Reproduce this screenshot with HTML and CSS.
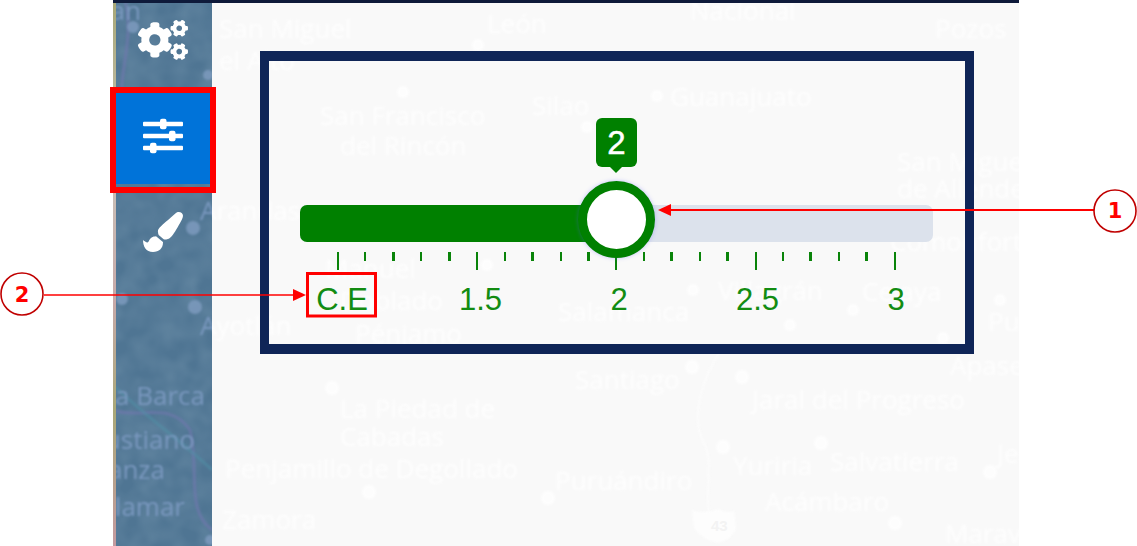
FILE: index.html
```html
<!DOCTYPE html>
<html lang="en">
<head>
    <meta charset="UTF-8">
    <title>Slider help</title>
    <link rel="stylesheet" href="styles.css">
</head>
<body>
<div class="stage">
    <div class="screen">
        <div class="topbar"></div>
        <div class="main">
            <div class="sidebar">
                <!-- map under the menu, same page coordinates as the big map -->
                <svg class="side-map" viewBox="113 3 99 543">
                    <defs>
                        <filter id="grain" x="0" y="0" width="100%" height="100%">
                            <feTurbulence type="fractalNoise" baseFrequency="0.05" numOctaves="2" seed="4"/>
                            <feColorMatrix type="matrix" values="0 0 0 0 0.2  0 0 0 0 0.33  0 0 0 0 0.45  0.7 0.7 0 0 -0.45"/>
                        </filter>
                    </defs>
                    <rect class="grain" x="113" y="3" width="99" height="543" filter="url(#grain)"/>
                    <path class="road-purple" d="M113 410 C140 420 170 400 190 430 C200 470 185 510 212 530"/>
                    <path class="road-purple" d="M125 0 C135 40 118 70 122 110"/>
                    <path class="road-teal" d="M113 385 C150 420 180 440 212 470"/>
                    <g class="side-dots">
                        <circle cx="133" cy="27" r="6"/>
                        <circle cx="208" cy="75" r="5"/>
                        <circle cx="193" cy="228" r="7"/>
                        <circle cx="122" cy="299" r="6"/>
                        <circle cx="195" cy="307" r="7"/>
                        <circle cx="210" cy="540" r="5"/>
                    </g>
                    <g class="side-labels">
                        <text class="end" x="141" y="20">Juan</text>
                        <text x="200" y="220">Arandas</text>
                        <text x="200" y="335">Ayotlán</text>
                        <text class="end" x="205" y="405">La Barca</text>
                        <text class="end" x="195" y="449">Venustiano</text>
                        <text class="end" x="165" y="479">Carranza</text>
                        <text class="end" x="185" y="516">Villamar</text>
                        <text x="222" y="529">Zamora</text>
                    </g>
                </svg>
                <div class="stripe"></div>
                <ul class="nav">
                    <li class="nav-item nav-first">
                        <svg class="icon-cogs" viewBox="0 0 640 512"><path d="M512.1 191l-8.2 14.3c-3 5.3-9.4 7.5-15.1 5.4-11.8-4.4-22.6-10.7-32.1-18.6-4.6-3.8-5.8-10.5-2.8-15.7l8.2-14.3c-6.9-8-12.3-17.3-15.9-27.4h-16.5c-6 0-11.2-4.3-12.2-10.3-2-12-2.1-24.6 0-37.1 1-6 6.2-10.4 12.2-10.4h16.5c3.6-10.1 9-19.4 15.9-27.4l-8.2-14.3c-3-5.2-1.9-11.9 2.8-15.7 9.5-7.9 20.4-14.2 32.1-18.6 5.7-2.1 12.1.1 15.1 5.4l8.2 14.3c10.5-1.9 21.2-1.9 31.7 0L552 6.3c3-5.3 9.4-7.5 15.1-5.4 11.8 4.4 22.6 10.7 32.1 18.6 4.6 3.8 5.8 10.5 2.8 15.7l-8.2 14.3c6.9 8 12.3 17.3 15.9 27.4h16.5c6 0 11.2 4.3 12.2 10.3 2 12 2.1 24.6 0 37.1-1 6-6.2 10.4-12.2 10.4h-16.5c-3.6 10.1-9 19.4-15.9 27.4l8.2 14.3c3 5.2 1.9 11.9-2.8 15.7-9.5 7.9-20.4 14.2-32.1 18.6-5.7 2.1-12.1-.1-15.1-5.4l-8.2-14.3c-10.4 1.9-21.2 1.9-31.7 0zm-10.5-58.8c38.5 29.6 82.4-14.3 52.8-52.8-38.5-29.7-82.4 14.3-52.8 52.8zM386.3 286.1l33.7 16.8c10.1 5.8 14.5 18.1 10.5 29.1-8.9 24.2-26.4 46.4-42.6 65.8-7.4 8.9-20.2 11.1-30.3 5.3l-29.1-16.8c-16 13.7-34.6 24.6-54.9 31.7v33.6c0 11.6-8.3 21.6-19.7 23.6-24.6 4.2-50.4 4.4-75.9 0-11.5-2-20-11.9-20-23.6V418c-20.3-7.2-38.9-18-54.9-31.7L74 403c-10 5.8-22.9 3.6-30.3-5.3-16.2-19.4-33.3-41.6-42.2-65.7-4-10.9.4-23.2 10.5-29.1l33.3-16.8c-3.9-20.9-3.9-42.4 0-63.4L12 205.8c-10.1-5.8-14.6-18.1-10.5-29 8.9-24.2 26-46.4 42.2-65.8 7.4-8.9 20.2-11.1 30.3-5.3l29.1 16.8c16-13.7 34.6-24.6 54.9-31.7V57.1c0-11.5 8.2-21.5 19.6-23.5 24.6-4.2 50.5-4.4 76-.1 11.5 2 20 11.9 20 23.6v33.6c20.3 7.2 38.9 18 54.9 31.7l29.1-16.8c10-5.8 22.9-3.6 30.3 5.3 16.2 19.4 33.2 41.6 42.1 65.8 4 10.9.1 23.2-10 29.1l-33.7 16.8c3.9 21 3.9 42.5 0 63.5zm-117.6 21.1c59.2-77-28.7-164.9-105.7-105.7-59.2 77 28.7 164.9 105.7 105.7zm243.4 182.7l-8.2 14.3c-3 5.3-9.4 7.5-15.1 5.4-11.8-4.4-22.6-10.7-32.1-18.6-4.6-3.8-5.8-10.5-2.8-15.7l8.2-14.3c-6.9-8-12.3-17.3-15.9-27.4h-16.5c-6 0-11.2-4.3-12.2-10.3-2-12-2.1-24.6 0-37.1 1-6 6.2-10.4 12.2-10.4h16.5c3.6-10.1 9-19.4 15.9-27.4l-8.2-14.3c-3-5.2-1.9-11.9 2.8-15.7 9.5-7.9 20.4-14.2 32.1-18.6 5.7-2.1 12.1.1 15.1 5.4l8.2 14.3c10.5-1.9 21.2-1.9 31.7 0l8.2-14.3c3-5.3 9.4-7.5 15.1-5.4 11.8 4.4 22.6 10.7 32.1 18.6 4.6 3.8 5.8 10.5 2.8 15.7l-8.2 14.3c6.9 8 12.3 17.3 15.9 27.4h16.5c6 0 11.2 4.3 12.2 10.3 2 12 2.1 24.6 0 37.1-1 6-6.2 10.4-12.2 10.4h-16.5c-3.6 10.1-9 19.4-15.9 27.4l8.2 14.3c3 5.2 1.9 11.9-2.8 15.7-9.5 7.9-20.4 14.2-32.1 18.6-5.7 2.1-12.1-.1-15.1-5.4l-8.2-14.3c-10.4 1.9-21.2 1.9-31.7 0zM501.6 431c38.5 29.6 82.4-14.3 52.8-52.8-38.5-29.6-82.4 14.3-52.8 52.8z"/></svg>
                    </li>
                    <li class="nav-item active">
                        <svg class="icon-sliders" viewBox="0 0 40 30">
                            <rect x="0" y="0.7" width="40" height="4.6" rx="1"/>
                            <rect x="17" y="-2.3" width="6.5" height="10.6" rx="2"/>
                            <rect x="0" y="12.7" width="40" height="4.6" rx="1"/>
                            <rect x="26" y="9.7" width="6.5" height="10.6" rx="2"/>
                            <rect x="0" y="24.7" width="40" height="4.6" rx="1"/>
                            <rect x="7" y="21.7" width="6.5" height="10.6" rx="2"/>
                        </svg>
                    </li>
                    <li class="nav-item">
                        <svg class="icon-brush" viewBox="0 0 512 512"><path d="M167.02 309.34c-40.12 2.58-76.53 17.86-97.19 72.3-2.35 6.21-8 9.98-14.59 9.98-11.11 0-45.46-27.67-55.25-34.35C0 439.62 37.93 512 128 512c75.86 0 128-43.77 128-120.19 0-3.11-.65-6.08-.97-9.13l-88.01-73.34zM457.89 0c-15.16 0-29.37 6.71-40.21 16.45C213.27 199.05 192 203.34 192 257.09c0 13.7 3.25 26.76 8.73 38.7l63.82 53.18c7.21 1.8 14.64 3.03 22.39 3.03 62.11 0 98.11-45.47 211.16-256.46 7.38-14.35 13.9-29.85 13.9-45.99C512 20.64 486 0 457.89 0z"/></svg>
                    </li>
                </ul>
            </div>
            <div class="map">
                <svg class="map-layer" viewBox="212 3 807 543">
                    <g class="map-dots">
                        <circle cx="478" cy="45" r="6"/>
                        <circle cx="403" cy="92" r="6"/>
                        <circle cx="657" cy="96" r="6"/>
                        <circle cx="587" cy="127" r="6"/>
                        <circle cx="487" cy="265" r="6"/>
                        <circle cx="693" cy="290" r="6"/>
                        <circle cx="853" cy="310" r="6"/>
                        <circle cx="790" cy="325" r="6"/>
                        <circle cx="943" cy="338" r="6"/>
                        <circle cx="1000" cy="300" r="6"/>
                        <circle cx="332" cy="388" r="7"/>
                        <circle cx="369" cy="492" r="7"/>
                        <circle cx="548" cy="498" r="7"/>
                        <circle cx="692" cy="367" r="7"/>
                        <circle cx="742" cy="377" r="7"/>
                        <circle cx="723" cy="447" r="7"/>
                        <circle cx="821" cy="443" r="7"/>
                        <circle cx="990" cy="472" r="7"/>
                        <circle cx="895" cy="523" r="7"/>
                    </g>
                    <path class="map-road" d="M724 345 C700 380 690 420 705 445 C715 470 700 500 715 540"/>
                    <path class="shield" d="M692 510 Q705 515 718 509 Q731 515 734 510 L736 528 Q732 540 718 543 Q702 540 694 528Z"/>
                    <text class="shield-num" x="711" y="531">43</text>
                    <g class="map-labels">
                        <text x="219" y="38">San Miguel</text>
                        <text x="219" y="70">el Alto</text>
                        <text x="487" y="33">León</text>
                        <text x="690" y="20">Nacional</text>
                        <text x="935" y="38">Pozos</text>
                        <text x="320" y="125">San Francisco</text>
                        <text x="340" y="155">del Rincón</text>
                        <text x="532" y="115">Silao</text>
                        <text x="670" y="106">Guanajuato</text>
                        <text x="897" y="171">San Miguel</text>
                        <text x="897" y="198">de Allende</text>
                        <text x="200" y="220">Arandas</text>
                        <text x="890" y="251">Comonfort</text>
                        <text x="325" y="278">Manuel</text>
                        <text x="340" y="310">Doblado</text>
                        <text x="718" y="300">Villagrán</text>
                        <text x="862" y="301">Celaya</text>
                        <text x="558" y="321">Salamanca</text>
                        <text x="200" y="335">Ayotlán</text>
                        <text x="355" y="343">Pénjamo</text>
                        <text x="988" y="331">Purísima</text>
                        <text x="950" y="375">Apaseo</text>
                        <text x="575" y="389">Santiago</text>
                        <text x="752" y="409">Jaral del Progreso</text>
                        <text x="340" y="418">La Piedad de</text>
                        <text x="340" y="446">Cabadas</text>
                        <text x="225" y="478">Penjamillo de Degollado</text>
                        <text x="555" y="490">Puruándiro</text>
                        <text x="733" y="475">Yuriria</text>
                        <text x="830" y="471">Salvatierra</text>
                        <text x="997" y="463">Jerécuaro</text>
                        <text x="765" y="511">Acámbaro</text>
                        <text x="222" y="529">Zamora</text>
                        <text x="945" y="543">Maravatío</text>
                    </g>
                </svg>
                <div class="panel">
                    <div class="slider">
                        <div class="track">
                            <div class="track-fill"></div>
                        </div>
                        <div class="thumb"></div>
                        <div class="bubble">2</div>
                    </div>
                    <div class="ticks">
                        <i class="major"></i><i></i><i></i><i></i><i></i>
                        <i class="major"></i><i></i><i></i><i></i><i></i>
                        <i class="major"></i><i></i><i></i><i></i><i></i>
                        <i class="major"></i><i></i><i></i><i></i><i></i>
                        <i class="major"></i>
                    </div>
                    <div class="scale">
                        <span>C.E</span>
                        <span>1.5</span>
                        <span>2</span>
                        <span>2.5</span>
                        <span>3</span>
                    </div>
                </div>
            </div>
        </div>
    </div>
    <!-- callouts drawn on top of the screenshot -->
    <svg class="notes" viewBox="0 0 1137 546">
        <rect class="red-box thick" x="113" y="90" width="100" height="100"/>
        <rect class="red-box" x="307.5" y="273.5" width="68" height="42.5"/>
        <line class="note-line" x1="670" y1="210" x2="1094" y2="210"/>
        <polygon class="note-arrow" points="658,210 671,204 671,216"/>
        <circle class="note-circle" cx="1115" cy="211" r="21"/>
        <text class="note-num" x="1115" y="218">1</text>
        <line class="note-line thin" x1="44" y1="295" x2="294" y2="295"/>
        <polygon class="note-arrow" points="306,295 293,289 293,301"/>
        <circle class="note-circle" cx="22" cy="294" r="21"/>
        <text class="note-num" x="22" y="302">2</text>
    </svg>
</div>
</body>
</html>
```

FILE: styles.css
```css
*{
    margin:0;
    padding:0;
    list-style: none;
    box-sizing: border-box;
}
html,body{
    width:100%;
    height:100%;
    background: #fff;
    overflow: hidden;
}
.stage{
    width: 1137px;
    height: 546px;
    position: relative;
    padding-left: 113px;
    font-family: "Liberation Sans", Arial, sans-serif;
}
.screen{
    width: 906px;
    height: 546px;
    display: flex;
    flex-direction: column;
}
.topbar{
    height: 3px;
    background: #0e1a3a;
}
.main{
    flex: 1;
    display: flex;
}

/* left menu */
.sidebar{
    width: 99px;
    position: relative;
    background: #4f7593;
}
.side-map{
    position: absolute;
    left:0;
    top:0;
    width: 99px;
    height: 543px;
}
.grain{
    opacity: .6;
}
.road-purple{
    fill: none;
    stroke: #6f78ad;
    stroke-width: 3;
    opacity: .7;
    filter: blur(1px);
}
.road-teal{
    fill: none;
    stroke: #4f93a8;
    stroke-width: 3;
    opacity: .5;
    filter: blur(1px);
}
.side-dots circle{
    fill: #7f9cc0;
    opacity: .8;
    filter: blur(1px);
}
.side-labels text{
    font-family: "Open Sans", sans-serif;
    font-size: 26px;
    fill: #7a98bf;
    filter: blur(.8px);
}
.side-labels text.end{
    text-anchor: end;
}
.stripe{
    position: absolute;
    left:0;
    top:0;
    width: 3px;
    height: 543px;
    background: linear-gradient(#a8a878, #c9c2b8 30%, #c7a9a9 55%, #a9a878 75%, #c49aa0);
}
.nav{
    position: relative;
    display: flex;
    flex-direction: column;
    padding-left: 3px;
}
.nav-item{
    height: 96px;
    display: flex;
    align-items: center;
    justify-content: center;
    padding-right: 3px;
}
.nav-first{
    height: 85px;
    padding-bottom: 11px;
}
.nav-item svg{
    display: block;
    fill: #fff;
    overflow: visible;
}
.nav-item.active{
    background: #0073d9;
}
.icon-cogs{
    width: 50px;
    height: 40px;
}
.icon-sliders{
    width: 40px;
    height: 30px;
}
.icon-brush{
    width: 40px;
    height: 40px;
}

/* map and the slider panel */
.map{
    flex: 1;
    position: relative;
    background: #f9f9f9;
    padding: 48px 45px 0 48px;
}
.map-layer{
    position: absolute;
    left:0;
    top:0;
    width: 807px;
    height: 543px;
}
.map-labels text{
    font-family: "Open Sans", sans-serif;
    font-size: 26px;
    fill: #fff;
    opacity: .8;
    filter: blur(1px);
}
.map-dots circle{
    fill: #fff;
    opacity: .8;
    filter: blur(1px);
}
.map-road{
    fill: none;
    stroke: #fcfcfc;
    stroke-width: 2;
    filter: blur(1px);
}
.shield{
    fill: #fdfdfd;
    filter: blur(1px);
}
.shield-num{
    font-size: 15px;
    font-weight: bold;
    fill: #f3f3f3;
}
.panel{
    position: relative;
    width: 714px;
    height: 303px;
    border-style: solid;
    border-color: #0f2557;
    border-width: 10px 9px;
    padding: 144px 32px 0 31px;
}
.slider{
    position: relative;
    height: 37px;
}
.track{
    height: 37px;
    border-radius: 7px;
    background: #dce2ec;
    overflow: hidden;
}
.track-fill{
    width: 317px;
    height: 100%;
    background: #008000;
}
.thumb{
    position: absolute;
    left: 278px;
    top: -24px;
    width: 77px;
    height: 77px;
    border-radius: 50%;
    background: #fff;
    border: 9.5px solid #008000;
    box-shadow: 0 0 4px rgba(90,90,255,.35);
}
.bubble{
    position: absolute;
    left: 296px;
    top: -87px;
    width: 41px;
    height: 49px;
    border-radius: 6px;
    background: #008000;
    color: #fff;
    font-size: 33px;
    line-height: 50px;
    text-align: center;
    -webkit-text-stroke: .5px #fff;
}
.bubble:after{
    content: '';
    position: absolute;
    left: 14px;
    top: 49px;
    border: 6.5px solid transparent;
    border-top-color: #008000;
    border-bottom: 0;
}
.ticks{
    display: flex;
    justify-content: space-between;
    align-items: flex-start;
    height: 18px;
    margin: 10px 37px 0 37px;
}
.ticks i{
    display: block;
    width: 2px;
    height: 9px;
    background: #0a840a;
}
.ticks i:nth-child(5n+3),
.ticks i:nth-child(5n+5){
    width: 3px;
}
.ticks i.major{
    height: 18px;
}
.scale{
    display: flex;
    justify-content: space-between;
    margin: 13px 37px 0 42px;
    color: #128c12;
    font-size: 31px;
    line-height: 34px;
}
.scale span{
    width: 0;
    display: flex;
    justify-content: center;
    white-space: nowrap;
}

/* callouts */
.notes{
    position: absolute;
    left:0;
    top:0;
    width: 1137px;
    height: 546px;
}
.red-box{
    fill: none;
    stroke: #f00;
    stroke-width: 3;
}
.red-box.thick{
    stroke-width: 6;
}
.note-line{
    stroke: #f00;
    stroke-width: 2;
}
.note-line.thin{
    stroke-width: 1.4;
}
.note-arrow{
    fill: #f00;
}
.note-circle{
    fill: #fff;
    stroke: #c00000;
    stroke-width: 1.6;
}
.note-num{
    font-family: "DejaVu Sans", sans-serif;
    font-size: 21px;
    font-weight: bold;
    fill: #f00;
    text-anchor: middle;
}
```
